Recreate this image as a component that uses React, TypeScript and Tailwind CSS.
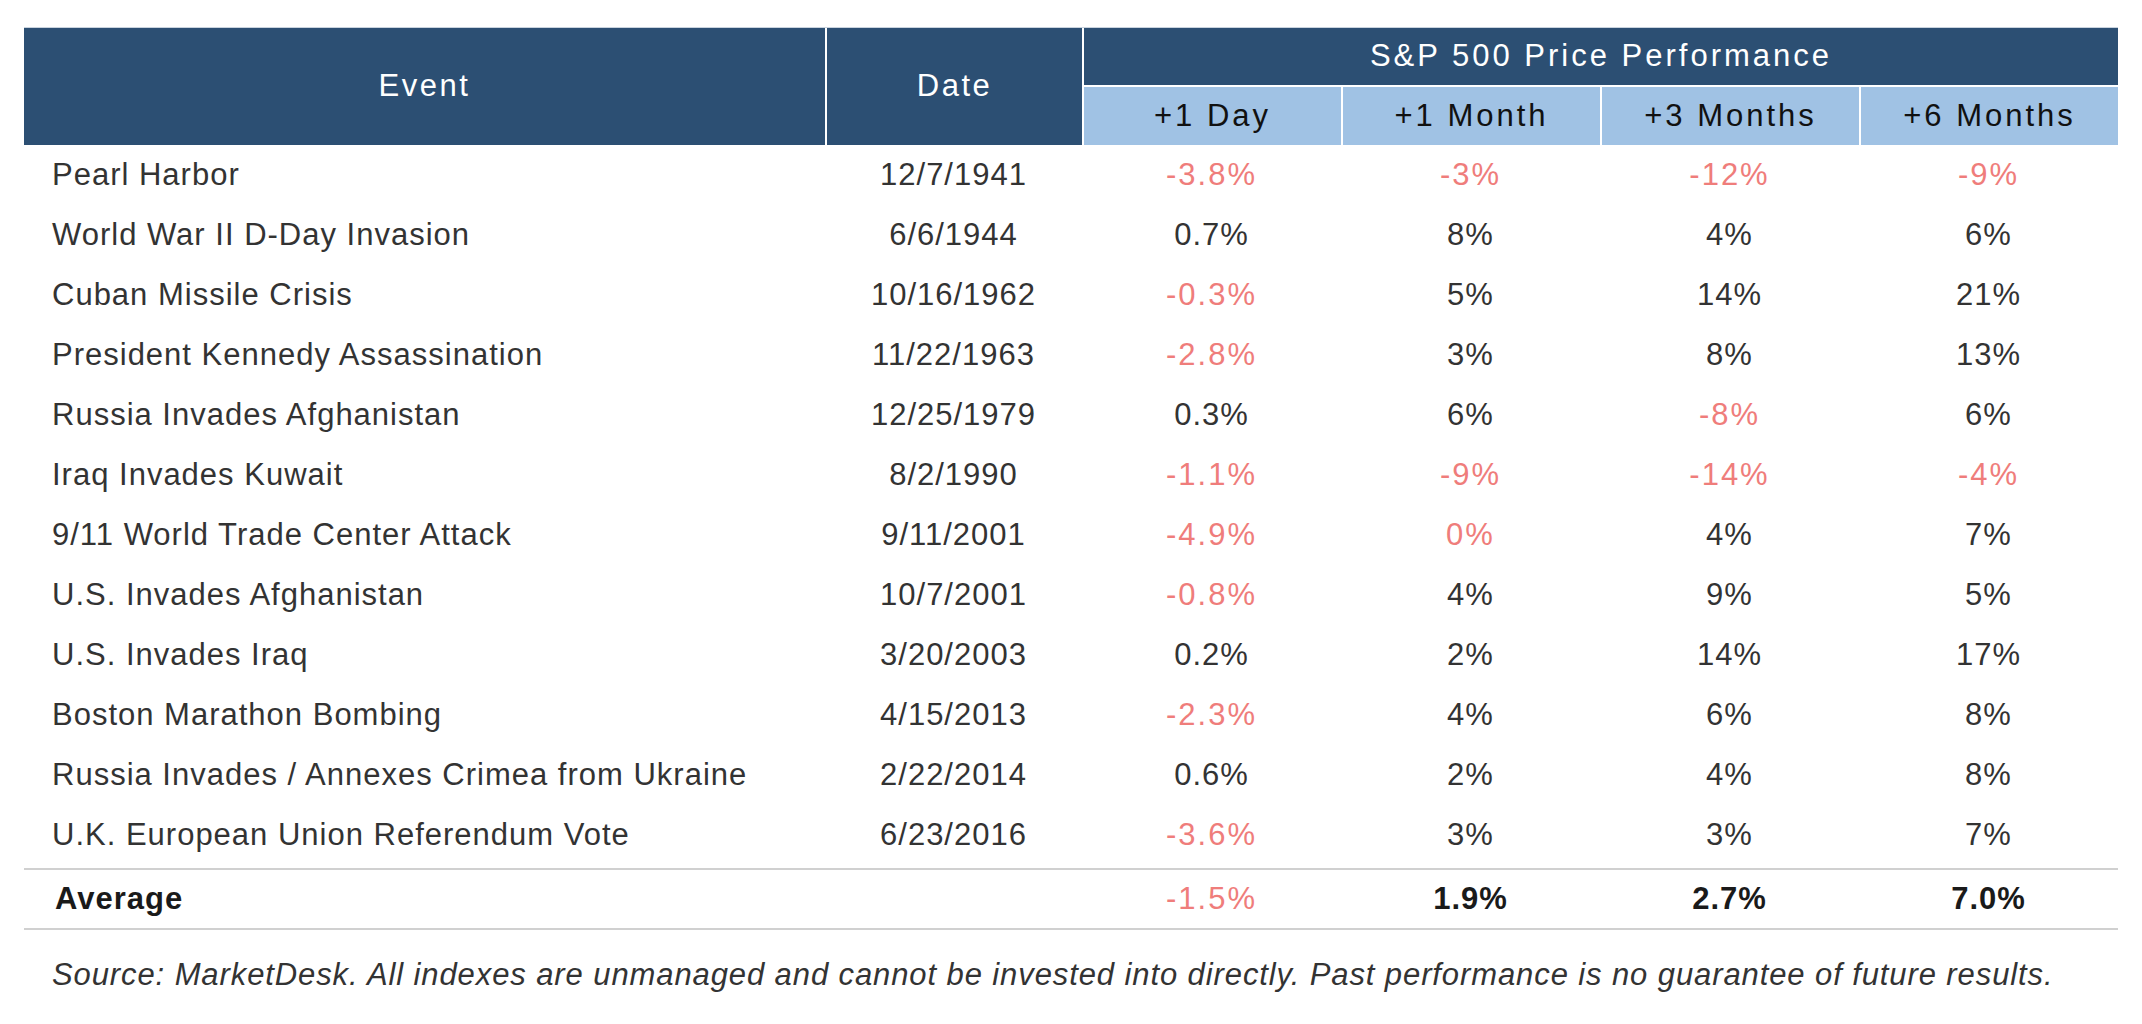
import React from 'react';

type Row = {
  event: string;
  date: string;
  values: string[];
};

const rows: Row[] = [
  { event: 'Pearl Harbor', date: '12/7/1941', values: ['-3.8%', '-3%', '-12%', '-9%'] },
  { event: 'World War II D-Day Invasion', date: '6/6/1944', values: ['0.7%', '8%', '4%', '6%'] },
  { event: 'Cuban Missile Crisis', date: '10/16/1962', values: ['-0.3%', '5%', '14%', '21%'] },
  { event: 'President Kennedy Assassination', date: '11/22/1963', values: ['-2.8%', '3%', '8%', '13%'] },
  { event: 'Russia Invades Afghanistan', date: '12/25/1979', values: ['0.3%', '6%', '-8%', '6%'] },
  { event: 'Iraq Invades Kuwait', date: '8/2/1990', values: ['-1.1%', '-9%', '-14%', '-4%'] },
  { event: '9/11 World Trade Center Attack', date: '9/11/2001', values: ['-4.9%', '0%', '4%', '7%'] },
  { event: 'U.S. Invades Afghanistan', date: '10/7/2001', values: ['-0.8%', '4%', '9%', '5%'] },
  { event: 'U.S. Invades Iraq', date: '3/20/2003', values: ['0.2%', '2%', '14%', '17%'] },
  { event: 'Boston Marathon Bombing', date: '4/15/2013', values: ['-2.3%', '4%', '6%', '8%'] },
  { event: 'Russia Invades / Annexes Crimea from Ukraine', date: '2/22/2014', values: ['0.6%', '2%', '4%', '8%'] },
  { event: 'U.K. European Union Referendum Vote', date: '6/23/2016', values: ['-3.6%', '3%', '3%', '7%'] },
];

// values shown in red in the source chart (includes the 0% for 9/11 +1 Month)
const isRed = (row: number, col: number, v: string) =>
  v.startsWith('-') || (row === 6 && col === 1);

const periods = ['+1 Day', '+1 Month', '+3 Months', '+6 Months'];

const cols = 'grid grid-cols-[801px_257px_259px_259px_259px_259px]';

export default function App() {
  return (
    <div className="min-h-screen w-[2142px] bg-white pt-[27px] pl-[24px] font-['Liberation_Sans',Arial,sans-serif] text-[31px] tracking-[1px] text-[#333333]">
      <div className="w-[2094px]">
        {/* header */}
        <div className={`${cols} grid-rows-[57px_60px] border-t border-[#c9d3de]`}>
          <div className="row-span-2 flex items-center justify-center bg-[#2c4f73] tracking-[2.5px] text-white">
            Event
          </div>
          <div className="row-span-2 flex items-center justify-center border-l-2 border-white bg-[#2c4f73] tracking-[2.5px] text-white">
            Date
          </div>
          <div className="col-span-4 flex items-center justify-center border-l-2 border-white bg-[#2c4f73] tracking-[3px] text-white">
            S&amp;P 500 Price Performance
          </div>
          {periods.map((p) => (
            <div
              key={p}
              className="flex items-center justify-center border-t-2 border-l-2 border-white bg-[#a0c2e4] tracking-[3px] text-[#111111]"
            >
              {p}
            </div>
          ))}
        </div>

        {/* body */}
        {rows.map((r, ri) => (
          <div key={r.event} className={`${cols} h-[60px] items-center`}>
            <div className="pl-[28px]">{r.event}</div>
            <div className="text-center">{r.date}</div>
            {r.values.map((v, ci) => (
              <div
                key={ci}
                className={`text-center ${isRed(ri, ci, v) ? 'tracking-[2px] text-[#ef7d7b]' : ''}`}
              >
                {v}
              </div>
            ))}
          </div>
        ))}

        {/* average */}
        <div className={`${cols} mt-[3px] h-[62px] items-center border-y-2 border-[#d0d0d0]`}>
          <div className="pl-[31px] font-bold text-[#1a1a1a]">Average</div>
          <div />
          <div className="text-center tracking-[2px] text-[#ef7d7b]">-1.5%</div>
          <div className="text-center font-bold text-[#1a1a1a]">1.9%</div>
          <div className="text-center font-bold text-[#1a1a1a]">2.7%</div>
          <div className="text-center font-bold text-[#1a1a1a]">7.0%</div>
        </div>

        <p className="mt-[22px] pl-[28px] italic tracking-[0.9px]">
          Source: MarketDesk. All indexes are unmanaged and cannot be invested into directly. Past performance is no
          guarantee of future results.
        </p>
      </div>
    </div>
  );
}
